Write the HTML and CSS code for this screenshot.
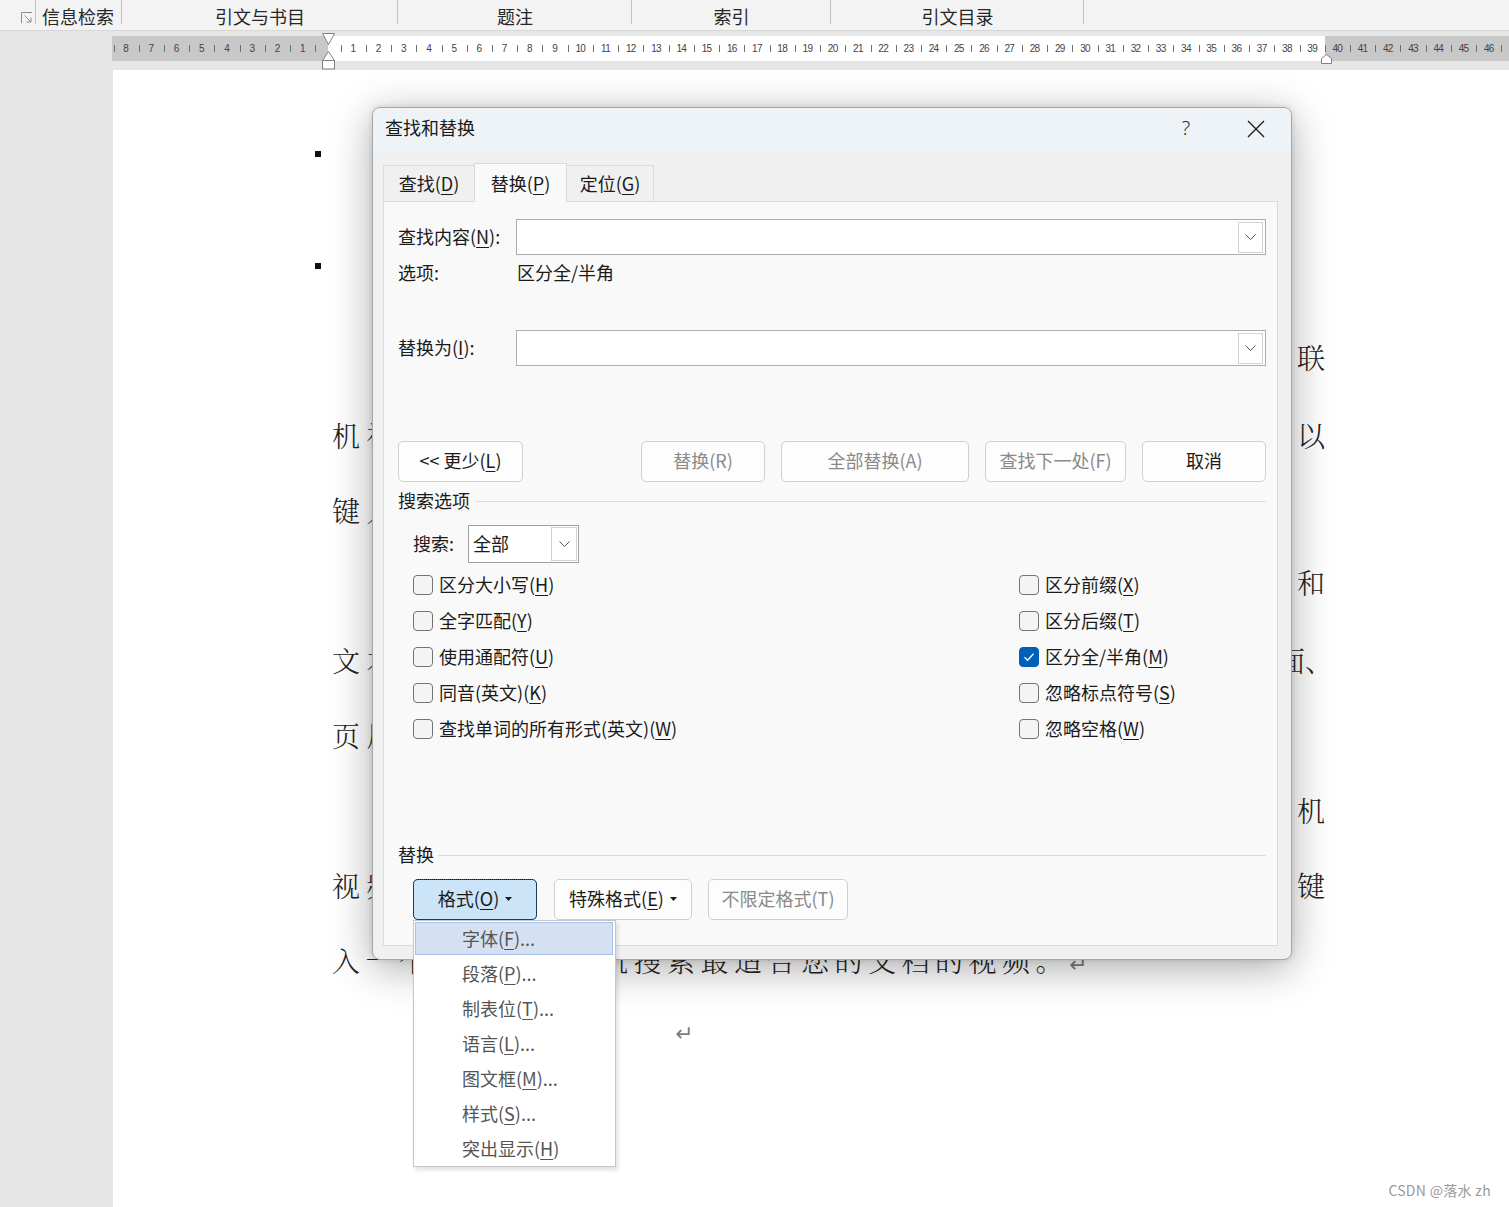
FILE: index.html
```html
<!DOCTYPE html>
<html lang="zh-CN">
<head>
<meta charset="utf-8">
<title>查找和替换</title>
<link rel="stylesheet" href="styles.css">
</head>
<body>
<div class="ribbon">
  <div class="rb-item rb-launch"><svg width="12" height="12" viewBox="0 0 12 12"><path d="M0.5 11V0.5H11M3.5 3.5L10 10M10 5.5V10H5.5" fill="none" stroke="#8c8c8c" stroke-width="1"/></svg></div>
  <div class="rb-item rb-first">信息检索</div>
  <div class="rb-item w276">引文与书目</div>
  <div class="rb-item w234">题注</div>
  <div class="rb-item w199">索引</div>
  <div class="rb-item w253">引文目录</div>
</div>
<div class="ruler">
  <div class="scale">
    <span class="u">8</span><span class="u">7</span><span class="u">6</span><span class="u">5</span><span class="u">4</span><span class="u">3</span><span class="u">2</span><span class="u">1</span><span class="u"></span><span class="u">1</span><span class="u">2</span><span class="u">3</span><span class="u">4</span><span class="u">5</span><span class="u">6</span><span class="u">7</span><span class="u">8</span><span class="u">9</span><span class="u u2">10</span><span class="u u2">11</span><span class="u u2">12</span><span class="u u2">13</span><span class="u u2">14</span><span class="u u2">15</span><span class="u u2">16</span><span class="u u2">17</span><span class="u u2">18</span><span class="u u2">19</span><span class="u u2">20</span><span class="u u2">21</span><span class="u u2">22</span><span class="u u2">23</span><span class="u u2">24</span><span class="u u2">25</span><span class="u u2">26</span><span class="u u2">27</span><span class="u u2">28</span><span class="u u2">29</span><span class="u u2">30</span><span class="u u2">31</span><span class="u u2">32</span><span class="u u2">33</span><span class="u u2">34</span><span class="u u2">35</span><span class="u u2">36</span><span class="u u2">37</span><span class="u u2">38</span><span class="u u2">39</span><span class="u u2">40</span><span class="u u2">41</span><span class="u u2">42</span><span class="u u2">43</span><span class="u u2">44</span><span class="u u2">45</span><span class="u u2">46</span><span class="u u2"></span>
  </div>
</div>
<div class="page">
  <div class="doc">
    <div class="ln hd"><i class="blt"></i></div>
    <div class="ln hd m37"><i class="blt"></i></div>
    <div class="ln split m17"><span class="lf"></span><span class="rt">联</span></div>
    <div class="ln split m3"><span class="lf">机视</span><span class="rt">以</span></div>
    <div class="ln split"><span class="lf">键入</span><span class="rt"></span></div>
    <div class="ln split mn3"><span class="lf"></span><span class="rt">和</span></div>
    <div class="ln split m3"><span class="lf">文本</span><span class="rt hang">面、</span></div>
    <div class="ln split"><span class="lf">页眉</span><span class="rt"></span></div>
    <div class="ln split"><span class="lf"></span><span class="rt">机</span></div>
    <div class="ln split"><span class="lf">视频</span><span class="rt">键</span></div>
    <div class="ln last"><span>入一个</span><span class="tail">机搜索最适合您的文档的视频。<span class="pm">↵</span></span></div>
    <div class="ln mn3 empty"><span class="pm">↵</span></div>
  </div>
</div>

<svg class="ind-left" width="13" height="37" viewBox="0 0 13 37"><g fill="#fff" stroke="#808080" stroke-width="1"><path d="M0.5 0.5H12.5L6.5 11.5Z"/><path d="M6.5 18.5L12.5 27.5H0.5Z"/><rect x="0.5" y="27.5" width="12" height="8.5"/></g></svg>
<svg class="ind-right" width="11" height="10" viewBox="0 0 11 10"><path d="M0.5 9.5V4.5L5.5 0.5L10.5 4.5V9.5Z" fill="#fff" stroke="#808080"/></svg>

<div class="dialog">
  <div class="dlg-title">
    <span class="dlg-caption">查找和替换</span>
    <span class="dlg-help">?</span>
    <span class="dlg-close"><svg width="18" height="18" viewBox="0 0 18 18"><path d="M1 1L17 17M17 1L1 17" stroke="#1b1b1b" stroke-width="1.3" fill="none"/></svg></span>
  </div>
  <div class="dlg-body">
    <div class="tabs">
      <div class="tab t1">查找(<u>D</u>)</div>
      <div class="tab t2 active">替换(<u>P</u>)</div>
      <div class="tab t3">定位(<u>G</u>)</div>
    </div>
    <div class="panel">
      <div class="field">
        <span class="lbl">查找内容(<u>N</u>):</span>
        <div class="combo"><span class="combo-btn"><svg width="11" height="6" viewBox="0 0 11 6"><path d="M0.5 0.5L5.5 5.5L10.5 0.5" fill="none" stroke="#555" stroke-width="1"/></svg></span></div>
      </div>
      <div class="opts"><span class="lbl lbl-o">选项:</span><span>区分全/半角</span></div>
      <div class="field r3">
        <span class="lbl">替换为(<u>I</u>):</span>
        <div class="combo"><span class="combo-btn"><svg width="11" height="6" viewBox="0 0 11 6"><path d="M0.5 0.5L5.5 5.5L10.5 0.5" fill="none" stroke="#555" stroke-width="1"/></svg></span></div>
      </div>
      <div class="btnrow">
        <div class="btn b-less">&lt;&lt; 更少(<u>L</u>)</div>
        <div class="btn-group">
          <div class="btn dis w124">替换(R)</div>
          <div class="btn dis w188">全部替换(A)</div>
          <div class="btn dis w141">查找下一处(F)</div>
          <div class="btn w124">取消</div>
        </div>
      </div>
      <div class="sect"><span>搜索选项</span><i class="rule"></i></div>
      <div class="srow">
        <span class="slbl">搜索:</span>
        <div class="select"><span>全部</span><span class="sel-btn"><svg width="11" height="6" viewBox="0 0 11 6"><path d="M0.5 0.5L5.5 5.5L10.5 0.5" fill="none" stroke="#555" stroke-width="1"/></svg></span></div>
      </div>
      <div class="checks">
        <div class="ck"><span class="box"></span><span class="ck-t">区分大小写(<u>H</u>)</span></div>
        <div class="ck"><span class="box"></span><span class="ck-t">全字匹配(<u>Y</u>)</span></div>
        <div class="ck"><span class="box"></span><span class="ck-t">使用通配符(<u>U</u>)</span></div>
        <div class="ck"><span class="box"></span><span class="ck-t">同音(英文)(<u>K</u>)</span></div>
        <div class="ck"><span class="box"></span><span class="ck-t">查找单词的所有形式(英文)(<u>W</u>)</span></div>
        <div class="ck"><span class="box"></span><span class="ck-t">区分前缀(<u>X</u>)</span></div>
        <div class="ck"><span class="box"></span><span class="ck-t">区分后缀(<u>T</u>)</span></div>
        <div class="ck"><span class="box on"><svg width="14" height="14" viewBox="0 0 14 14"><path d="M2.5 7.2L5.6 10.2L11.5 3.8" fill="none" stroke="#fff" stroke-width="1.3"/></svg></span><span class="ck-t">区分全/半角(<u>M</u>)</span></div>
        <div class="ck"><span class="box"></span><span class="ck-t">忽略标点符号(<u>S</u>)</span></div>
        <div class="ck"><span class="box"></span><span class="ck-t">忽略空格(<u>W</u>)</span></div>
      </div>
      <div class="sect s2"><span>替换</span><i class="rule"></i></div>
      <div class="frow">
        <div class="btn b-fmt">格式(<u>O</u>)<svg class="tri" width="7" height="4" viewBox="0 0 7 4"><path d="M0 0H7L3.5 4Z" fill="#1b1b1b"/></svg></div>
        <div class="btn b-spec">特殊格式(<u>E</u>)<svg class="tri" width="7" height="4" viewBox="0 0 7 4"><path d="M0 0H7L3.5 4Z" fill="#1b1b1b"/></svg></div>
        <div class="btn dis b-nolim">不限定格式(T)</div>
      </div>
    </div>
  </div>
</div>

<div class="menu">
  <div class="mi on">字体(<u>F</u>)...</div>
  <div class="mi">段落(<u>P</u>)...</div>
  <div class="mi">制表位(<u>T</u>)...</div>
  <div class="mi">语言(<u>L</u>)...</div>
  <div class="mi">图文框(<u>M</u>)...</div>
  <div class="mi">样式(<u>S</u>)...</div>
  <div class="mi">突出显示(<u>H</u>)</div>
</div>

<div class="watermark">CSDN @落水 zh</div>
</body>
</html>
```
FILE: styles.css
```css
* { box-sizing: border-box; }
html, body { margin: 0; padding: 0; }
body {
  width: 1509px;
  height: 1207px;
  overflow: hidden;
  position: relative;
  background: #e6e6e6;
  font-family: "Noto Sans CJK SC", "Noto Sans", sans-serif;
  color: #1b1b1b;
}
u { text-decoration: underline; text-decoration-thickness: 1px; text-underline-offset: 3px; }

/* ribbon */
.ribbon {
  display: flex;
  height: 31px;
  background: #f3f3f3;
  border-bottom: 1px solid #d6d6d6;
  font-size: 18px;
  color: #262626;
}
.rb-item {
  height: 30px;
  line-height: 32px;
  white-space: nowrap;
  overflow: hidden;
  text-align: center;
  background: linear-gradient(#c4c4c4, #c4c4c4) no-repeat right top / 1px 24px;
}
.rb-launch { width: 36px; padding: 12px 0 0 18px; line-height: 0; }
.rb-first { width: 86px; text-align: left; padding-left: 6px; }
.w276 { width: 276px; }
.w234 { width: 234px; }
.w199 { width: 199px; }
.w253 { width: 253px; }

/* ruler */
.ruler {
  height: 25px;
  margin: 5px 0 0 112px;
  overflow: hidden;
  background: linear-gradient(to right, #c8c8c8 0, #c8c8c8 216px, #ffffff 216px, #ffffff 1213px, #c8c8c8 1213px);
}
.scale { display: flex; margin-left: 1.5px; }
.u {
  flex: 0 0 25.24px;
  height: 25px;
  text-align: center;
  font: 10px/25px "Liberation Sans", Arial, sans-serif;
  color: #444;
  background: linear-gradient(#707070, #707070) no-repeat 0 50% / 1px 7px;
}
.u2 { letter-spacing: -0.7px; }
.ind-left { position: absolute; left: 322px; top: 33px; }
.ind-right { position: absolute; left: 1321px; top: 54px; }

/* page */
.page {
  margin: 9px 0 0 113px;
  height: 1137px;
  background: #fff;
  padding: 46px 0 0 219px;
}
.doc {
  width: 993px;
  font-family: "Noto Serif CJK SC", "Noto Sans CJK SC", serif;
  font-size: 28px;
  font-weight: 300;
  color: #222;
}
.ln {
  height: 75px;
  line-height: 75px;
  letter-spacing: 5.5px;
  white-space: nowrap;
}
.split { display: flex; justify-content: space-between; letter-spacing: 0; }
.lf { letter-spacing: 6.46px; }
.hang { margin-right: -8px; }
.last { display: flex; }
.tail { margin-left: 167.5px; }
.m37 { margin-top: 37px; }
.m17 { margin-top: 17px; }
.m3 { margin-top: 3px; }
.mn3 { margin-top: -3px; }
.hd { display: flex; align-items: center; }
.blt { flex: none; width: 6px; height: 6px; background: #111; margin-left: -17px; }
.pm { color: #7d7d7d; font-family: "DejaVu Sans", sans-serif; font-size: 22px; font-weight: 400; }
.empty { padding-left: 343px; line-height: 69px; }

/* dialog */
.dialog {
  position: absolute;
  left: 372px;
  top: 107px;
  width: 920px;
  height: 853px;
  border: 1px solid #a6a6a6;
  border-radius: 8px;
  background: #f0f0f0;
  box-shadow: 0 8px 42px rgba(0, 0, 0, 0.33), 0 0 6px rgba(0, 0, 0, 0.12);
  overflow: hidden;
  display: flex;
  flex-direction: column;
  font-size: 18px;
  color: #1b1b1b;
}
.dlg-title {
  flex: none;
  height: 43px;
  background: #eef3f8;
  display: flex;
  align-items: center;
  padding: 0 12px 5px;
}
.dlg-caption { flex: 1; }
.dlg-help {
  width: 46px;
  text-align: center;
  font-family: "Noto Sans", sans-serif;
  font-size: 20px;
  font-weight: 300;
  color: #333;
}
.dlg-close { width: 46px; margin-left: 24px; display: flex; justify-content: center; padding-top: 3px; }
.dlg-body {
  flex: 1;
  padding: 12px 13px 13px 10px;
  display: flex;
  flex-direction: column;
}
.tabs { flex: none; display: flex; align-items: flex-end; height: 38px; }
.tab {
  height: 36px;
  line-height: 34px;
  text-align: center;
  background: #f0f0f0;
  border: 1px solid #dadada;
  border-bottom: none;
}
.t1 { width: 92px; }
.t2 { width: 93px; margin-left: -1px; }
.t3 { width: 88px; margin-left: -1px; }
.tab.active {
  height: 39px;
  line-height: 38px;
  margin-bottom: -1px;
  background: #f9f9f9;
  position: relative;
  z-index: 1;
}
.panel {
  flex: none;
  height: 745px;
  border: 1px solid #dadada;
  background: #f9f9f9;
  padding: 17px 11px 0 14px;
}
.field { display: flex; align-items: center; height: 36px; }
.lbl { flex: none; width: 118px; padding-bottom: 2px; }
.lbl-o { width: 119px; padding-bottom: 0; }
.combo {
  flex: 1;
  height: 36px;
  border: 1px solid #adadad;
  background: #fff;
  display: flex;
  justify-content: flex-end;
  align-items: center;
  padding-right: 2px;
}
.combo-btn {
  width: 25px;
  height: 31px;
  border: 1px solid #d2d2d2;
  background: #fff;
  display: flex;
  align-items: center;
  justify-content: center;
}
.opts { display: flex; height: 36px; line-height: 34px; }
.r3 { margin-top: 39px; }

.btnrow { margin-top: 75px; height: 41px; display: flex; justify-content: space-between; }
.btn-group { display: flex; gap: 16px; }
.btn {
  height: 41px;
  border: 1px solid #d0d0d0;
  border-radius: 5px;
  background: #fdfdfd;
  display: flex;
  align-items: center;
  justify-content: center;
  white-space: nowrap;
  padding-bottom: 3px;
}
.dis { color: #8a8a8a; }
.b-less { width: 125px; }
.w124 { width: 124px; }
.w188 { width: 188px; }
.w141 { width: 141px; }

.sect { display: flex; align-items: center; height: 38px; }
.sect span { padding-bottom: 2px; }
.rule { flex: 1; height: 1px; background: #dcdcdc; margin-left: 6px; }
.s2 { height: 24px; margin-top: 96px; }
.s2 .rule { margin-left: 4px; }

.srow { margin-top: 5px; height: 38px; display: flex; align-items: center; padding-left: 15px; }
.slbl { width: 55px; flex: none; padding-bottom: 2px; }
.select {
  width: 111px;
  height: 38px;
  border: 1px solid #a0a0a0;
  background: #fff;
  display: flex;
  align-items: center;
  justify-content: space-between;
  padding: 0 1px 0 4px;
}
.select > span:first-child { padding-bottom: 2px; }
.sel-btn {
  width: 26px;
  height: 34px;
  border: 1px solid #d2d2d2;
  display: flex;
  align-items: center;
  justify-content: center;
}

.checks {
  margin-top: 4px;
  padding-left: 15px;
  display: grid;
  grid-template-columns: 606px 1fr;
  grid-template-rows: repeat(5, 36px);
  grid-auto-flow: column;
}
.ck { display: flex; align-items: center; gap: 6px; }
.ck-t { padding-bottom: 2px; white-space: nowrap; }
.box {
  flex: none;
  width: 20px;
  height: 20px;
  border: 1px solid #737373;
  border-radius: 4px;
  background: #f4f4f4;
}
.box.on {
  background: #005fb8;
  border-color: #005fb8;
  display: flex;
  align-items: center;
  justify-content: center;
}

.frow { margin-top: 12px; padding-left: 15px; display: flex; }
.tri { margin-left: 6px; margin-top: 2px; }
.b-fmt {
  width: 124px;
  background: #cce4f7;
  border-color: #0067c0;
  outline: 1px dotted #1b1b1b;
  outline-offset: -1px;
}
.b-spec { width: 138px; margin-left: 17px; }
.b-nolim { width: 140px; margin-left: 16px; }

/* dropdown menu */
.menu {
  position: absolute;
  left: 413px;
  top: 920px;
  width: 203px;
  height: 247px;
  border: 1px solid #c6c6c6;
  background: #fff;
  box-shadow: 2px 3px 4px rgba(0, 0, 0, 0.12);
  display: flex;
  flex-direction: column;
  font-size: 18px;
  color: #555;
}
.mi {
  flex: none;
  height: 33px;
  margin: 1px 2px 1px 1px;
  border: 1px solid transparent;
  line-height: 31px;
  padding-left: 46px;
  white-space: nowrap;
}
.mi.on { background: #d5e1f2; border-color: #a7c2e8; }

.watermark {
  position: absolute;
  right: 18px;
  bottom: 7px;
  font-size: 14px;
  letter-spacing: 0.3px;
  color: #9a9a9a;
  font-family: "Noto Sans CJK SC", sans-serif;
}
```
